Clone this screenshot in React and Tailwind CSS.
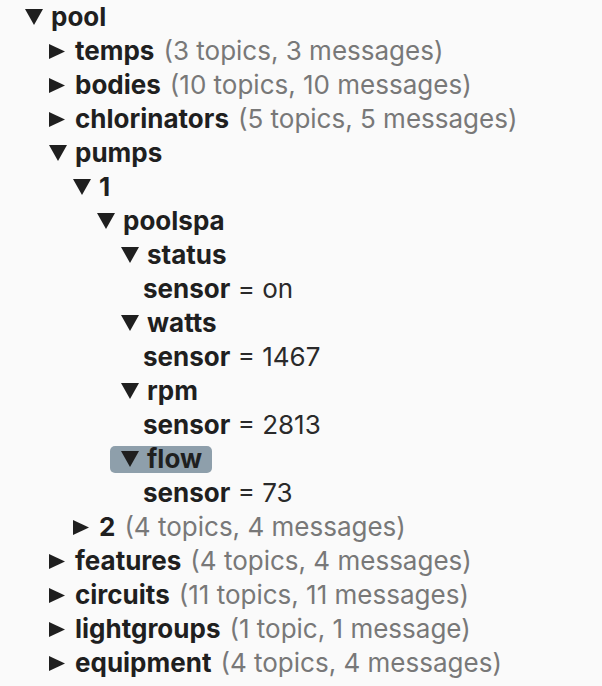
import React from "react";

const rows = [
  { level: 0, open: true, name: "pool" },
  { level: 1, name: "temps", meta: "(3 topics, 3 messages)" },
  { level: 1, name: "bodies", meta: "(10 topics, 10 messages)" },
  { level: 1, name: "chlorinators", meta: "(5 topics, 5 messages)" },
  { level: 1, open: true, name: "pumps" },
  { level: 2, open: true, name: "1" },
  { level: 3, open: true, name: "poolspa" },
  { level: 4, open: true, name: "status" },
  { level: 5, leaf: true, name: "sensor", value: "on" },
  { level: 4, open: true, name: "watts" },
  { level: 5, leaf: true, name: "sensor", value: "1467" },
  { level: 4, open: true, name: "rpm" },
  { level: 5, leaf: true, name: "sensor", value: "2813" },
  { level: 4, open: true, name: "flow", selected: true },
  { level: 5, leaf: true, name: "sensor", value: "73" },
  { level: 2, name: "2", meta: "(4 topics, 4 messages)" },
  { level: 1, name: "features", meta: "(4 topics, 4 messages)" },
  { level: 1, name: "circuits", meta: "(11 topics, 11 messages)" },
  { level: 1, name: "lightgroups", meta: "(1 topic, 1 message)" },
  { level: 1, name: "equipment", meta: "(4 topics, 4 messages)" },
];

function Caret({ open }) {
  if (open) {
    return (
      <svg width="18" height="16" viewBox="0 0 18 16" className="shrink-0">
        <path d="M0 0H18L9 16Z" fill="#1f1f1f" />
      </svg>
    );
  }
  return (
    <svg width="16" height="15" viewBox="0 0 16 15" className="shrink-0">
      <path d="M0 0L16 7.5L0 15Z" fill="#1f1f1f" />
    </svg>
  );
}

function Row({ row }) {
  const indent = row.leaf ? 23 + 24 * row.level : 25 + 24 * row.level;
  return (
    <div className="flex h-[34px] items-center whitespace-nowrap" style={{ paddingLeft: indent }}>
      {row.leaf ? (
        <span>
          <span className="font-bold text-[#1f1f1f]">{row.name}</span>
          <span className="text-[#2a2a2a]"> = {row.value}</span>
        </span>
      ) : (
        <span
          className={
            row.selected
              ? "-ml-[11px] flex h-[27px] items-center rounded-[5px] bg-[#8e9fab] pl-[11px] pr-[10px]"
              : "flex items-center"
          }
        >
          <span className="flex w-[26px] items-center">
            <Caret open={row.open} />
          </span>
          <span className="font-bold text-[#1f1f1f]">{row.name}</span>
          {row.meta && <span className="ml-[9px] text-[#787878]">{row.meta}</span>}
        </span>
      )}
    </div>
  );
}

export default function App() {
  return (
    <div className="h-[686px] w-[602px] overflow-hidden bg-[#fafafa] font-['Inter',sans-serif] text-[26px] leading-none">
      {rows.map((r, i) => (
        <Row key={i} row={r} />
      ))}
    </div>
  );
}
